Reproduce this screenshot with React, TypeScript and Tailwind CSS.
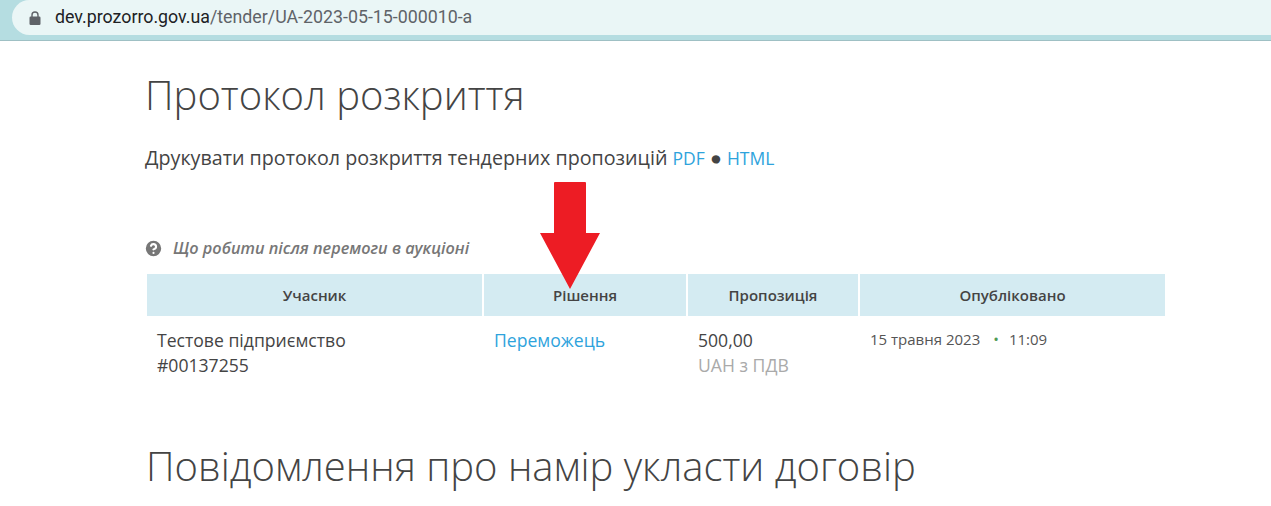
import { CircleHelp } from "lucide-react";

const font = "font-['Open_Sans',sans-serif]";

function AddressBar() {
    return (
        <div className="h-[41px] bg-[#b5dde1] border-b border-[#9fc0c4] pl-[12px]">
            <div className="h-[35px] bg-[#eaf6f6] rounded-l-[18px] flex items-center pl-[17px]">
                <svg width="12" height="14" viewBox="0 0 12 14">
                    <path d="M3 6V4a3 3 0 0 1 6 0v2" fill="none" stroke="#5f6368" strokeWidth="1.4" />
                    <rect x="0.5" y="5.5" width="11" height="8.5" rx="1.2" fill="#5f6368" />
                </svg>
                <div className="ml-[14px] font-['Roboto',sans-serif] text-[17.8px] text-[#202124]">
                    dev.prozorro.gov.ua<span className="text-[#5f6368]">/tender/UA-2023-05-15-000010-a</span>
                </div>
            </div>
        </div>
    );
}

function Arrow() {
    return (
        <svg className="absolute left-[540px] top-[182px]" width="60" height="108" viewBox="0 0 60 108">
            <path d="M14 1 Q14 0 15 0 H45 Q46 0 46 1 V51 H60 L30 107 L0 51 H14 Z" fill="#ed1c24" />
        </svg>
    );
}

export default function App() {
    return (
        <div className={`relative w-[1271px] h-[506px] overflow-hidden bg-white ${font}`}>
            <AddressBar />
            <main className="pl-[146px]">
                <h1 className="-ml-[1px] mt-[27px] text-[40px] leading-[54px] font-light text-[#444]">Протокол розкриття</h1>
                <p className="-ml-[1px] mt-[22px] text-[19.7px] leading-[28px] text-[#444]">
                    Друкувати протокол розкриття тендерних пропозицій{" "}
                    <span className="text-[17.5px] text-[#2ea3dc]">PDF</span> <span className="text-[19.7px]">●</span>{" "}
                    <span className="text-[17.5px] text-[#2ea3dc]">HTML</span>
                </p>
                <div className="-ml-[3px] mt-[64px] flex items-center h-[24px] text-[#777]">
                    <CircleHelp size={21} fill="#777" stroke="#fff" strokeWidth={2.4} />
                    <span className="ml-[9px] text-[16.25px] font-semibold italic">Що робити після перемоги в аукціоні</span>
                </div>
                <div className="ml-[1px] mt-[14px] w-[1018px] grid grid-cols-[335px_202px_170px_305px] gap-x-[2px]">
                    <div className="h-[42px] bg-[#d4ebf2] flex items-center justify-center text-[15px] font-semibold text-[#444]">Учасник</div>
                    <div className="h-[42px] bg-[#d4ebf2] flex items-center justify-center text-[15px] font-semibold text-[#444]">Рішення</div>
                    <div className="h-[42px] bg-[#d4ebf2] flex items-center justify-center text-[15px] font-semibold text-[#444]">Пропозиція</div>
                    <div className="h-[42px] bg-[#d4ebf2] flex items-center justify-center text-[15px] font-semibold text-[#444]">Опубліковано</div>
                    <div className="pt-[12px] pl-[10px] text-[17.6px] leading-[25px] text-[#444]">
                        Тестове підприємство<br />#00137255
                    </div>
                    <div className="pt-[12px] pl-[10px] text-[17.6px] leading-[25px] text-[#2ea3dc]">Переможець</div>
                    <div className="pt-[12px] pl-[10px] text-[17.6px] leading-[25px] text-[#444]">
                        500,00
                        <div className="text-[#aaa]">UAH з ПДВ</div>
                    </div>
                    <div className="pt-[13px] pl-[10px] text-[15px] leading-[20px] text-[#555] flex">
                        <span>15 травня 2023</span>
                        <span className="ml-[13px] mr-[10px] text-[#4f9a55]">•</span>
                        <span>11:09</span>
                    </div>
                </div>
                <h2 className="mt-[61px] text-[40px] leading-[54px] font-light text-[#444]">Повідомлення про намір укласти договір</h2>
            </main>
            <Arrow />
        </div>
    );
}
